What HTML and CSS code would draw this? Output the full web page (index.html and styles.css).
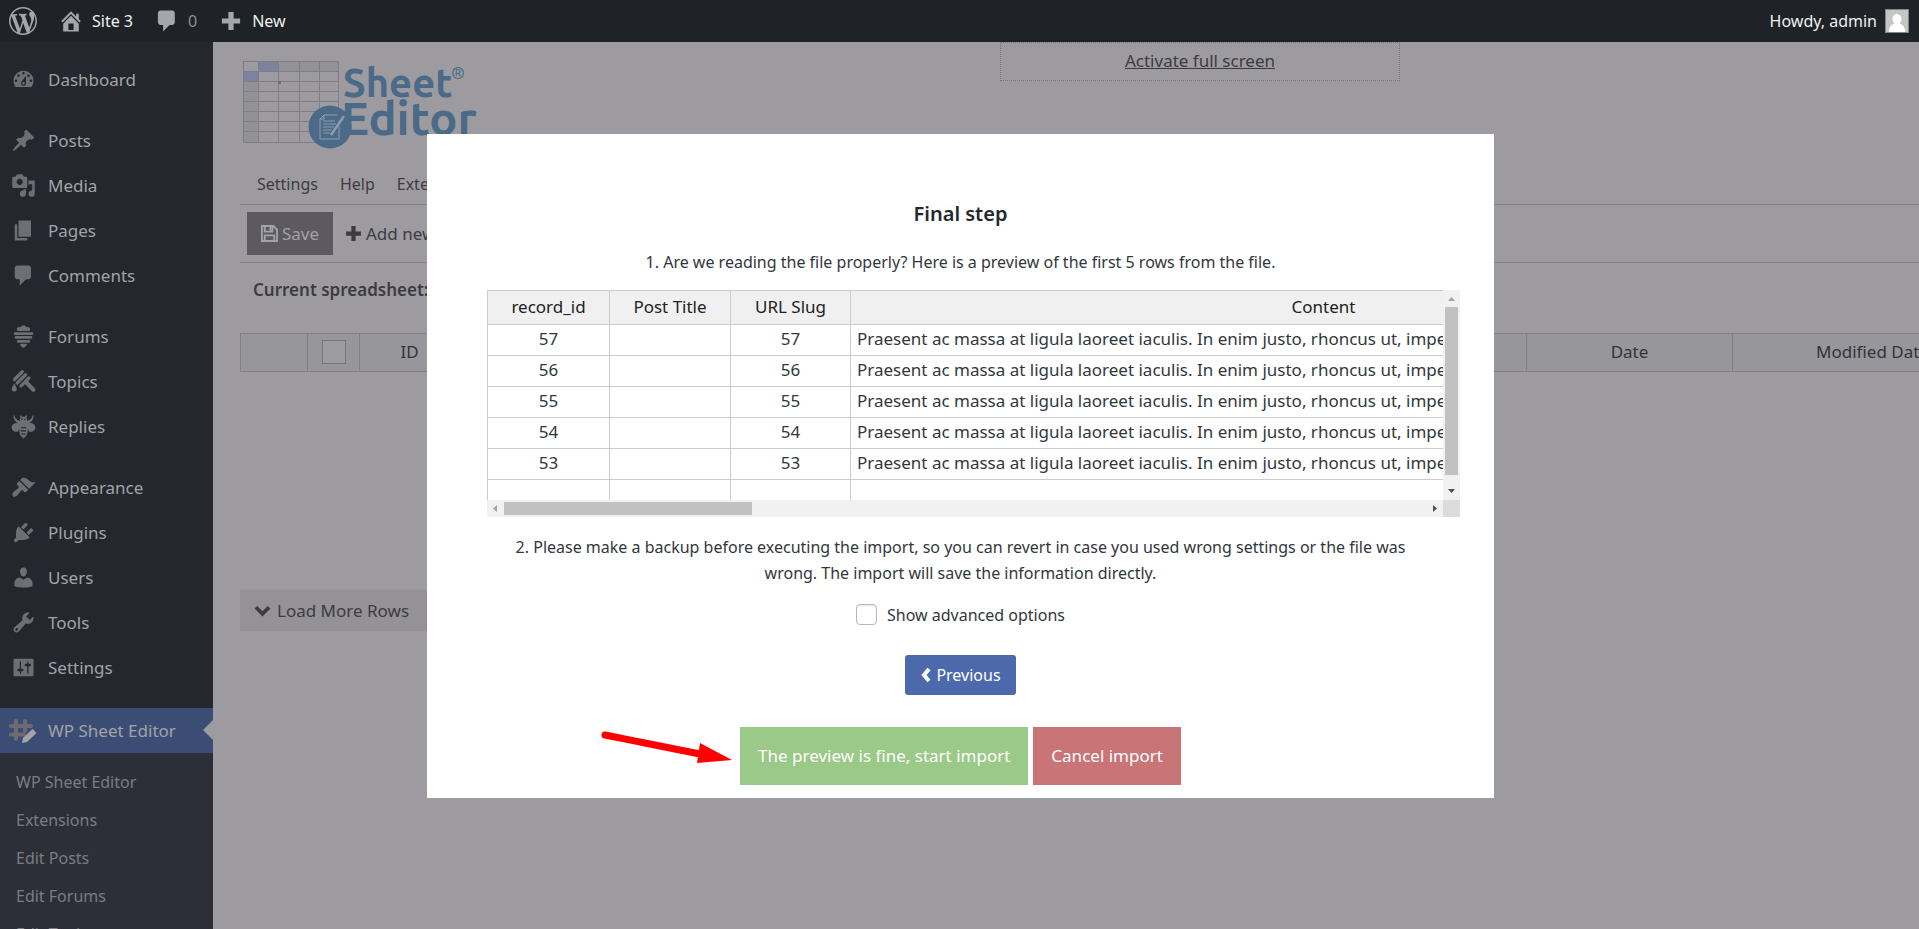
FILE: index.html
```html
<!DOCTYPE html>
<html lang="en">
<head>
<meta charset="utf-8">
<title>WP Sheet Editor - Import</title>
<link rel="stylesheet" href="styles.css">
</head>
<body>
<header class="adminbar">
  <a class="bar-item" href="#" aria-label="WordPress"><svg class="bar-icon wp" viewBox="0 0 20 20"><path d="M20 10c0-5.51-4.49-10-10-10C4.48 0 0 4.49 0 10c0 5.52 4.48 10 10 10 5.51 0 10-4.48 10-10zM7.78 15.37L4.37 6.22c.55-.02 1.17-.08 1.17-.08.5-.06.44-1.13-.06-1.11 0 0-1.45.11-2.37.11-.18 0-.37 0-.58-.01C4.12 2.69 6.87 1.11 10 1.11c2.33 0 4.45.87 6.05 2.34-.68-.11-1.65.39-1.65 1.58 0 .74.45 1.36.9 2.1.35.61.55 1.36.55 2.46 0 1.49-1.4 5-1.4 5l-3.03-8.37c.54-.02.82-.17.82-.17.5-.05.44-1.25-.06-1.22 0 0-1.44.12-2.38.12-.87 0-2.33-.12-2.33-.12-.5-.03-.56 1.2-.06 1.22l.92.08 1.26 3.41zM17.41 10c.24-.64.74-1.87.43-4.25.7 1.29 1.05 2.71 1.05 4.25 0 3.29-1.73 6.24-4.4 7.78.97-2.59 1.94-5.2 2.92-7.78zM6.1 18.09C3.12 16.65 1.11 13.53 1.11 10c0-1.3.23-2.48.72-3.59C3.25 10.3 4.67 14.2 6.1 18.09zm4.03-6.63l2.58 6.98c-.86.29-1.76.45-2.71.45-.79 0-1.57-.11-2.29-.33.81-2.38 1.62-4.74 2.42-7.1z"/></svg></a>
  <a class="bar-item" href="#"><svg class="bar-icon" viewBox="0 0 20 20"><path d="M16 8.5l1.53 1.53-1.06 1.06L10 4.6l-6.47 6.49-1.06-1.06L10 2.5l4 4v-2h2v4zm-6-2.46l6 5.99V18H4v-5.97zM12 17v-5H8v5h4z"/></svg>Site 3</a>
  <a class="bar-item muted" href="#"><svg class="bar-icon" viewBox="0 0 20 20"><path d="M5 2h9c1.1 0 2 .9 2 2v7c0 1.1-.9 2-2 2h-2l-5 5v-5H5c-1.1 0-2-.9-2-2V4c0-1.1.9-2 2-2z"/></svg>0</a>
  <a class="bar-item" href="#"><svg class="bar-icon" viewBox="0 0 20 20"><path d="M8 3h4v5h5v4h-5v5H8v-5H3V8h5z"/></svg>New</a>
  <a class="bar-item account" href="#">Howdy, admin<svg class="avatar" viewBox="0 0 24 24"><path fill="#82878c" d="M0 0h24v24H0z"/><path fill="#c5c5c5" d="M1 1h22v22H1z"/><path fill="#fff" d="M12 5c3 0 4.500 2.200 4.500 5 0 2-1 3.500-2 4.500 3 1 5.500 3 5.700 8.500H3.800c.2-5.500 2.700-7.500 5.700-8.500-1-1-2-2.500-2-4.500 0-2.800 1.500-5 4.500-5z"/></svg></a>
</header>
<div class="shell">
  <nav class="sidebar">
    <ul class="menu">
      <li><a href="#"><svg viewBox="0 0 20 20"><path d="M3.760 16h12.480c1.100-1.370 1.760-3.110 1.760-5 0-4.420-3.580-8-8-8s-8 3.580-8 8c0 1.890.66 3.630 1.760 5zM10 4c.55 0 1 .45 1 1s-.45 1-1 1-1-.45-1-1 .45-1 1-1zM6 6c.55 0 1 .45 1 1s-.45 1-1 1-1-.45-1-1 .45-1 1-1zm8 0c.55 0 1 .45 1 1s-.45 1-1 1-1-.45-1-1 .45-1 1-1zm-5.370 5.550L12 7v6c0 1.100-.9 2-2 2s-2-.9-2-2c0-.57.24-1.080.63-1.450zM4 10c.55 0 1 .45 1 1s-.45 1-1 1-1-.45-1-1 .45-1 1-1zm12 0c.55 0 1 .45 1 1s-.45 1-1 1-1-.45-1-1 .45-1 1-1zm-5 3c0-.55-.45-1-1-1s-1 .45-1 1 .45 1 1 1 1-.45 1-1z"/></svg>Dashboard</a></li>
      <li class="gap"><a href="#"><svg viewBox="0 0 20 20"><path d="M10.440 3.020l1.820-1.820 6.360 6.350-1.830 1.820c-1.050-.68-2.480-.57-3.410.36l-.75.75c-.92.93-1.040 2.350-.35 3.410l-1.830 1.820-2.410-2.410-2.800 2.790c-.42.42-3.380 2.710-3.800 2.290s1.860-3.390 2.280-3.810l2.790-2.790L4.100 9.360l1.830-1.820c1.050.69 2.480.57 3.400-.36l.75-.75c.93-.92 1.050-2.350.36-3.410z"/></svg>Posts</a></li>
      <li><a href="#"><svg viewBox="0 0 20 20"><path d="M13 11V4c0-.55-.45-1-1-1h-1.670L9 1H5L3.670 3H2c-.55 0-1 .45-1 1v7c0 .55.45 1 1 1h10c.55 0 1-.45 1-1zM7 4.500c1.380 0 2.500 1.120 2.500 2.500S8.380 9.500 7 9.500 4.500 8.380 4.500 7 5.620 4.500 7 4.500zM14 6h5v10.500c0 1.380-1.120 2.500-2.500 2.500S14 17.880 14 16.500s1.120-2.500 2.500-2.500c.17 0 .34.02.5.05V9h-3V6zm-4 8.050V13h2v3.500c0 1.380-1.120 2.500-2.500 2.500S7 17.880 7 16.500 8.120 14 9.500 14c.17 0 .34.02.5.05z"/></svg>Media</a></li>
      <li><a href="#"><svg viewBox="0 0 20 20"><path d="M6 15V2h10v13H6zm-1 1h8v2H3V5h2v11z"/></svg>Pages</a></li>
      <li><a href="#"><svg viewBox="0 0 20 20"><path d="M5 2h9c1.100 0 2 .9 2 2v7c0 1.100-.9 2-2 2h-2l-5 5v-5H5c-1.100 0-2-.9-2-2V4c0-1.100.9-2 2-2z"/></svg>Comments</a></li>
      <li class="gap"><a href="#"><svg viewBox="0 0 20 20"><path d="M7.500 2.500C8 .7 12 .7 12.500 2.500c1.800-.3 3 .6 2.800 1.900-.1.800-.7 1.200-1.400 1.200H6.100c-.7 0-1.300-.4-1.400-1.200-.2-1.300 1-2.200 2.800-1.900zM3.300 6.500h13.400c1.500 0 1.500 2.200 0 2.200H3.300c-1.500 0-1.500-2.200 0-2.200zm.8 3.100h11.800c1.500 0 1.500 2.200 0 2.200H4.100c-1.500 0-1.500-2.200 0-2.200zm1.700 3.100h8.400c1.500 0 1.500 2.200 0 2.200H5.800c-1.500 0-1.500-2.200 0-2.200zm2.100 3.100h4.200c1 0 .8 1.500-.3 1.900-.8.300-.9 1.300-1.800 1.300s-1-1-1.800-1.300c-1.100-.4-1.300-1.900-.3-1.900z"/></svg>Forums</a></li>
      <li><a href="#"><svg viewBox="0 0 20 20"><g fill="none" stroke="currentColor" stroke-linecap="round"><path stroke-width="2.600" d="M9 2.200L2.800 8.400M11.600 4.600L4.900 11.300M14.300 7.200L8 13.500"/><path stroke-width="3.400" d="M12.800 11.300l5 5.200"/></g><path d="M2.600 11.500c1 1.700 2 3.200 2 4.600 0 2.600-4 2.600-4 0 0-1.400 1-2.900 2-4.600z"/></svg>Topics</a></li>
      <li><a href="#"><svg viewBox="0 0 20 20"><path fill-rule="evenodd" d="M7.800 1l1.300 1.200h1.800L12.200 1l.9.600-.9 1.200c.7.600.8 1.500.6 2.600 2-.2 4-1.600 4.500-4.200h.8c-.1 3-1.500 5-3.300 6 2.800-.1 4.700 1.300 4.700 3.600 0 2.600-2.700 4.200-5.100 3.100L13.400 12c.3 3.500-1 6.200-3.400 7.500-2.400-1.300-3.700-4-3.400-7.500l-1 1.900C3.200 15 .5 13.400.5 10.800c0-2.300 1.900-3.700 4.700-3.600-1.800-1-3.200-3-3.300-6h.8c.5 2.600 2.500 4 4.500 4.200C7 4.300 7.100 3.400 7.800 2.800L6.900 1.600zM8.300 3.700v1h1v-1zM10.700 3.700v1h1v-1zM8 10.500v.9h4v-.9zM7.900 13v.9h4.200V13zM8.300 15.500v.8h3.400v-.8z"/></svg>Replies</a></li>
      <li class="gap"><a href="#"><svg viewBox="0 0 20 20"><path d="M14.480 11.060L7.410 3.990l1.500-1.500c.5-.56 2.300-.47 3.510.32 1.210.8 1.430 1.280 2.910 2.100 1.180.64 2.450 1.260 4.450.85zm-.71.71L6.700 4.700 4.930 6.470c-.39.39-.39 1.020 0 1.410l1.060 1.060c.39.39.39 1.030 0 1.420-.6.6-1.430 1.110-2.210 1.690-.35.26-.7.53-1.010.84C1.430 14.230.4 16.080 1.400 17.070c.99 1 2.840-.03 4.180-1.360.31-.31.58-.66.85-1.020.57-.78 1.080-1.610 1.690-2.210.39-.39 1.020-.39 1.410 0l1.060 1.060c.39.39 1.020.39 1.410 0z"/></svg>Appearance</a></li>
      <li><a href="#"><svg viewBox="0 0 20 20"><path d="M13.110 4.360L9.870 7.600 8 5.730l3.240-3.240c.35-.34 1.050-.2 1.560.32.52.51.66 1.210.31 1.550zm-8 1.770l.91-1.120 9.010 9.010-1.190.84c-.71.71-2.630 1.160-3.820 1.160H6.140L4.900 17.260c-.59.59-1.540.59-2.120 0-.59-.58-.59-1.530 0-2.120l1.240-1.240v-3.880c0-1.130.4-3.190 1.090-3.890zm7.260 3.970l3.240-3.240c.34-.35 1.040-.21 1.550.31.52.51.66 1.210.31 1.550l-3.240 3.250z"/></svg>Plugins</a></li>
      <li><a href="#"><svg viewBox="0 0 20 20"><path d="M10 9.250c-2.270 0-2.730-3.440-2.730-3.440C7 4.020 7.820 2 9.970 2c2.160 0 2.980 2.020 2.710 3.810 0 0-.41 3.440-2.680 3.440zm0 2.570L12.720 10c2.390 0 4.520 2.330 4.520 4.530v2.490s-3.650 1.130-7.240 1.130c-3.650 0-7.240-1.130-7.240-1.130v-2.490c0-2.250 1.940-4.480 4.470-4.480z"/></svg>Users</a></li>
      <li><a href="#"><svg viewBox="0 0 20 20"><path d="M16.680 9.770c-1.340 1.340-3.300 1.670-4.950.99l-5.410 6.520c-.99.99-2.590.99-3.580 0s-.99-2.590 0-3.570l6.520-5.420c-.68-1.650-.35-3.610.99-4.950 1.280-1.280 3.120-1.620 4.720-1.060l-2.890 2.890 2.820 2.820 2.860-2.870c.53 1.580.18 3.390-1.080 4.650zM3.810 16.210c.4.39 1.040.39 1.430 0 .4-.4.4-1.040 0-1.430-.39-.4-1.030-.4-1.430 0-.39.39-.39 1.030 0 1.430z"/></svg>Tools</a></li>
      <li><a href="#"><svg viewBox="0 0 20 20"><path d="M18 16V4c0-.55-.45-1-1-1H3c-.55 0-1 .45-1 1v12c0 .55.45 1 1 1h14c.55 0 1-.45 1-1zM8 11h1c.55 0 1 .45 1 1s-.45 1-1 1H8v1.500c0 .28-.22.5-.5.5s-.5-.22-.5-.5V13H6c-.55 0-1-.45-1-1s.45-1 1-1h1V5.500c0-.28.22-.5.5-.5s.5.220.5.5V11zm5-2h-1c-.55 0-1-.45-1-1s.45-1 1-1h1V5.500c0-.28.22-.5.5-.5s.5.220.5.5V7h1c.55 0 1 .45 1 1s-.45 1-1 1h-1v5.500c0 .28-.22.5-.5.5s-.5-.22-.5-.5V9z"/></svg>Settings</a></li>
      <li class="gap current"><a href="#"><svg class="sheet-icon" viewBox="0 0 30 26"><path fill="none" stroke="#6b6b70" stroke-width="4" stroke-linecap="round" d="M8 3v18M17 3v10M3 8h20M3 16.500h13"/><path fill="#a5a4a8" d="M14 25l1-5 9.500-9 4 4-9.500 9z"/></svg>WP Sheet Editor</a></li>
    </ul>
    <ul class="submenu">
      <li><a href="#">WP Sheet Editor</a></li>
      <li><a href="#">Extensions</a></li>
      <li><a href="#">Edit Posts</a></li>
      <li><a href="#">Edit Forums</a></li>
      <li><a href="#">Edit Topics</a></li>
    </ul>
  </nav>
  <main class="content">
    <div class="brand-row">
      <div class="brand">
        <svg class="logo" viewBox="0 0 244 92" role="img" aria-label="Sheet Editor">
          <path fill="#929196" d="M1 1h96v10H1zM1 1h15v82H1z"/>
          <path fill="#9d9ba0" d="M1 1h15v10H1z"/>
          <path fill="#7c82a0" d="M16 1h21v10H16zM1 11h15v11H1z"/>
          <path fill="none" stroke="#7f7e83" d="M1 1.500h96M1 11.500h96M1 21.500h96M1 31.500h96M1 41.500h96M1 51.500h96M1 61.500h96M1 71.500h96M1 82.500h96M1.500 1v82M16.500 1v82M36.500 1v82M57.500 1v82M77.500 1v82M96.500 1v82"/>
          <path fill="#6f6e73" d="M36 21h3v3h-3z"/>
          <circle cx="88" cy="67" r="21.500" fill="#4a6a88"/>
          <g fill="none" stroke="#8e9cab"><path d="M82 55h13.500M97 66v13H78V59l4-4v4h-4M81 61h12M81 64h13M81 67h11M81 70h9M81 73h7"/><path stroke-width="2.500" d="M102 56L89 75"/></g>
          <g class="logo-text"><text x="101" y="37" font-size="40">Sheet</text><text x="99" y="75" font-size="47">Editor</text><text class="reg" x="209" y="19" font-size="17">®</text></g>
        </svg>
      </div>
      <div class="fullscreen"><a href="#">Activate full screen</a></div>
    </div>
    <nav class="tabs"><a href="#">Settings</a><a href="#">Help</a><a href="#">Extensions</a></nav>
    <div class="toolbar">
      <button class="save" type="button"><svg viewBox="0 0 18 18"><path fill="none" stroke="currentColor" stroke-width="2" d="M1 1h12l4 4v12H1zM4 1v6h8V1M4 17v-6h10v6"/><path d="M9 2h2v4H9z"/></svg>Save</button>
      <button class="add" type="button"><svg viewBox="0 0 16 16"><path d="M6 1h4v5h5v4h-5v5H6v-5H1V6h5z"/></svg>Add new</button>
    </div>
    <p class="current-sheet">Current spreadsheet: Posts</p>
    <div class="sheet">
      <table class="sheet-table">
        <tr><th class="c-num"></th><th class="c-check"><input type="checkbox" aria-label="Select all rows"></th><th class="c-id">ID</th><th class="c-title"></th><th class="c-date">Date</th><th class="c-mod">Modified Date</th></tr>
      </table>
    </div>
    <button class="load-more" type="button"><svg viewBox="0 0 18 12"><path fill="none" stroke="currentColor" stroke-width="4" d="M2 2l7 7 7-7"/></svg>Load More Rows</button>
  </main>
</div>
<div class="overlay">
  <section class="modal" role="dialog" aria-labelledby="step-title">
    <h1 id="step-title">Final step</h1>
    <p class="question">1. Are we reading the file properly? Here is a preview of the first 5 rows from the file.</p>
    <div class="preview">
      <div class="preview-view">
        <table class="preview-table">
          <thead><tr><th class="p-id">record_id</th><th class="p-title">Post Title</th><th class="p-slug">URL Slug</th><th class="p-content">Content</th></tr></thead>
          <tbody>
            <tr><td>57</td><td></td><td>57</td><td>Praesent ac massa at ligula laoreet iaculis. In enim justo, rhoncus ut, imperdiet a, venenatis vitae</td></tr>
            <tr><td>56</td><td></td><td>56</td><td>Praesent ac massa at ligula laoreet iaculis. In enim justo, rhoncus ut, imperdiet a, venenatis vitae</td></tr>
            <tr><td>55</td><td></td><td>55</td><td>Praesent ac massa at ligula laoreet iaculis. In enim justo, rhoncus ut, imperdiet a, venenatis vitae</td></tr>
            <tr><td>54</td><td></td><td>54</td><td>Praesent ac massa at ligula laoreet iaculis. In enim justo, rhoncus ut, imperdiet a, venenatis vitae</td></tr>
            <tr><td>53</td><td></td><td>53</td><td>Praesent ac massa at ligula laoreet iaculis. In enim justo, rhoncus ut, imperdiet a, venenatis vitae</td></tr>
            <tr><td></td><td></td><td></td><td></td></tr>
          </tbody>
        </table>
      </div>
      <div class="vbar"><svg viewBox="0 0 17 17"><path fill="#a3a3a3" d="M5 11l3.500-4 3.500 4z"/></svg><span class="vthumb"></span><svg viewBox="0 0 17 17"><path fill="#505050" d="M5 6h7l-3.500 4z"/></svg></div>
      <div class="hbar"><svg viewBox="0 0 17 17"><path fill="#a3a3a3" d="M10 5v7L6 8.500z"/></svg><span class="hthumb"></span><svg viewBox="0 0 17 17"><path fill="#505050" d="M7 5v7l4-3.500z"/></svg></div>
      <div class="corner"></div>
    </div>
    <p class="backup">2. Please make a backup before executing the import, so you can revert in case you used wrong settings or the file was wrong. The import will save the information directly.</p>
    <label class="advanced"><input type="checkbox">Show advanced options</label>
    <button class="previous" type="button"><svg viewBox="0 0 12 16"><path fill="none" stroke="currentColor" stroke-width="4" d="M9 2L4 8l5 6"/></svg>Previous</button>
    <div class="actions">
      <button class="start" type="button">The preview is fine, start import</button>
      <button class="cancel" type="button">Cancel import</button>
      <svg class="pointer" viewBox="0 0 134 36"><path fill="none" stroke="#f00" stroke-width="7" stroke-linecap="round" d="M5 8L100 27"/><path fill="#f00" d="M100 16L132 33 97 36z"/></svg>
    </div>
  </section>
</div>
</body>
</html>
```

FILE: styles.css
```css
* { box-sizing: border-box; }

body {
  margin: 0;
  height: 100vh;
  overflow: hidden;
  display: flex;
  flex-direction: column;
  background: #9d9ba0;
  color: #3c3b41;
  font-family: "Segoe UI", "Noto Sans", "Open Sans", sans-serif;
  font-size: 17px;
}

a { color: inherit; text-decoration: none; }
ul { list-style: none; margin: 0; padding: 0; }
svg { fill: currentColor; flex: none; }
button { border: 0; font: inherit; color: inherit; cursor: pointer; }

.adminbar {
  flex: none;
  position: relative;
  z-index: 2;
  display: flex;
  align-items: center;
  gap: 21px;
  height: 42px;
  padding: 0 10px 0 9px;
  background: #1f2327;
  color: #f0f0f1;
  font-size: 16px;
}
.bar-item { display: flex; align-items: center; gap: 8px; }
.bar-icon { width: 26px; height: 26px; color: #a3a7ac; }
.bar-icon.wp { width: 28px; height: 28px; }
.muted { color: #8c8f94; }
.account { margin-left: auto; }
.avatar { width: 24px; height: 24px; }

.shell { flex: 1; min-height: 0; display: flex; }

.sidebar { flex: none; width: 213px; overflow: hidden; background: #24272e; color: #a3a3a6; }
.menu { padding-top: 15px; }
.menu .gap { margin-top: 16px; }
.menu a { display: flex; align-items: center; gap: 12px; height: 45px; padding-left: 11px; }
.menu svg { width: 25px; height: 25px; color: #6d6f75; }
.menu .current { position: relative; margin-top: 18px; background: #3c4d75; }
.menu .current::after {
  content: "";
  position: absolute;
  right: 0;
  top: 12px;
  border: 10px solid transparent;
  border-left: 0;
  border-right-color: #9d9ba0;
}
.menu .sheet-icon { width: 30px; height: 26px; margin-left: -3px; margin-right: -2px; }
.submenu { padding-top: 10px; height: 100%; background: #2c2f38; color: #7b7c82; font-size: 16px; }
.submenu a { display: flex; align-items: center; height: 38px; padding-left: 16px; }

.content { flex: 1; min-width: 0; padding-left: 27px; overflow: hidden; }
.brand-row { display: flex; height: 121px; }
.brand { flex: 0 0 760px; padding: 18px 0 0 2px; }
.logo { display: block; width: 244px; height: 92px; }
.logo-text { fill: #4a6a88; font-family: "Ubuntu", "Noto Sans", sans-serif; font-weight: 700; }
.reg { font-weight: 400; }
.fullscreen {
  display: flex;
  justify-content: center;
  width: 400px;
  height: 39px;
  padding-top: 6px;
  border: 1px dotted #76757a;
}
.fullscreen a { text-decoration: underline; }
.tabs { display: flex; gap: 22px; height: 41px; padding: 10px 17px 0; font-size: 16px; }
.toolbar {
  display: flex;
  align-items: center;
  gap: 6px;
  height: 59px;
  padding-left: 7px;
  border: solid #828186;
  border-width: 1px 0;
}
.toolbar button { display: flex; align-items: center; justify-content: center; gap: 4px; height: 43px; background: none; }
.toolbar .save { width: 86px; padding: 0; background: #5c5a60; color: #a3a2a6; }
.toolbar svg { width: 17px; height: 17px; }
.current-sheet { margin: 0; padding: 14px 13px; line-height: 26px; font-size: 17px; font-weight: 600; }
.sheet { height: 257px; margin-top: 16px; overflow: hidden; }
.sheet-table { table-layout: fixed; width: 1773px; border-collapse: collapse; background: #97969b; }
.sheet-table th { height: 38px; padding: 0 0 2px; border: 1px solid #807f84; font-weight: 400; color: #333238; }
.c-num { width: 67px; }
.c-check { width: 52px; }
.c-id { width: 100px; }
.c-date { width: 206px; }
.c-mod { width: 280px; }
.sheet-table input { appearance: none; display: block; width: 24px; height: 24px; margin: 0 auto; border: 1px solid #74767c; background: #9d9ba0; }
.load-more { display: flex; align-items: center; gap: 6px; width: 200px; height: 41px; padding: 0 14px; background: #949297; }
.load-more svg { width: 17px; height: 12px; }

.overlay { position: fixed; inset: 0; z-index: 1; display: flex; align-items: center; justify-content: center; padding: 2px 0 0 2px; }
.modal {
  display: flex;
  flex-direction: column;
  align-items: center;
  width: 1067px;
  max-width: 100%;
  padding: 65px 60px 13px;
  background: #fff;
  color: #32373c;
  font-size: 16px;
  text-align: center;
}
.modal h1 { margin: 0; font-size: 20px; line-height: 30px; font-weight: 600; color: #23282d; }
.modal p { margin: 0; line-height: 26px; }
.modal .question { padding: 20px 0 15px; }
.preview {
  align-self: stretch;
  display: grid;
  grid-template-columns: 1fr 17px;
  grid-template-rows: 210px 17px;
  margin-right: -26px;
}
.preview-view { overflow: hidden; }
.preview-table { table-layout: fixed; width: 1310px; border-collapse: collapse; font-size: 17px; color: #32373c; }
.preview-table th, .preview-table td { height: 31px; padding: 0 6px 1px; border: 1px solid #ccc; line-height: 24px; font-weight: 400; text-align: center; white-space: nowrap; overflow: hidden; }
.preview-table th { height: 34px; background: #f0f0f0; color: #222; }
.preview-table td:last-child { text-align: left; }
.p-id { width: 122px; }
.p-title { width: 121px; }
.p-slug { width: 120px; }
.vbar, .hbar { display: flex; align-items: center; background: #f1f1f1; }
.vbar { flex-direction: column; justify-content: space-between; }
.vbar svg, .hbar svg { width: 17px; height: 17px; }
.vthumb { width: 13px; height: 168px; margin-bottom: auto; background: #c1c1c1; }
.hthumb { width: 248px; height: 13px; margin-right: auto; background: #c1c1c1; }
.corner { background: #dcdcdc; }
.modal .backup { padding: 17px 16px 17px; }
.advanced { display: flex; align-items: center; gap: 10px; line-height: 24px; }
.advanced input { appearance: none; width: 21px; height: 21px; margin: 0; border: 1px solid #b4b9be; border-radius: 4px; box-shadow: inset 0 1px 2px rgba(0, 0, 0, .1); }
.previous { display: flex; align-items: center; justify-content: center; gap: 4px; width: 111px; height: 40px; margin: 28px 0 32px; padding: 0; border-radius: 3px; background: #4c6aab; color: #fff; }
.previous svg { width: 12px; height: 16px; }
.actions { position: relative; display: flex; gap: 5px; font-size: 17px; color: #fff; }
.actions button { height: 58px; padding: 0 18px; }
.start { background: #9ac988; }
.cancel { background: #c97476; }
.pointer { position: absolute; right: 100%; top: 0; width: 134px; height: 36px; margin-right: 6px; }
```
